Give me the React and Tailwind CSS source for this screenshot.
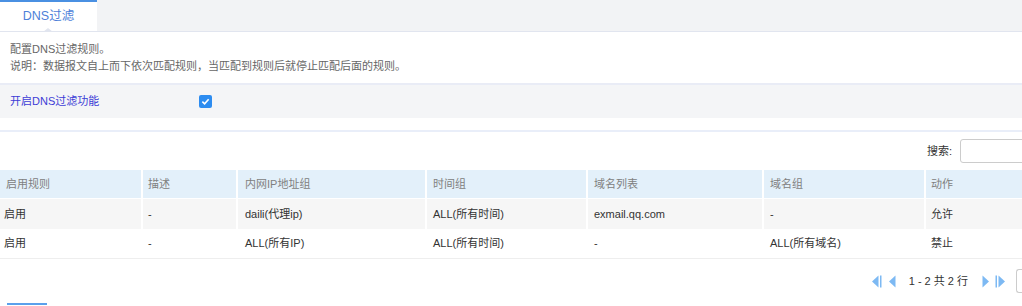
import React from 'react';

const font = { fontFamily: '"Liberation Sans", "Noto Sans CJK SC", sans-serif' };

const cols = [
  { key: 'enable', label: '启用规则', w: 'w-[141px]', pl: 'pl-[6px]' },
  { key: 'desc', label: '描述', w: 'w-[93px]', pl: 'pl-[5px]' },
  { key: 'ip', label: '内网IP地址组', w: 'w-[187px]', pl: 'pl-[7px]' },
  { key: 'time', label: '时间组', w: 'w-[159px]', pl: 'pl-[6px]' },
  { key: 'domains', label: '域名列表', w: 'w-[174px]', pl: 'pl-[6px]' },
  { key: 'dgroup', label: '域名组', w: 'w-[160px]', pl: 'pl-[6px]' },
  { key: 'action', label: '动作', w: 'flex-1', pl: 'pl-[5px]' },
];

const rows = [
  { enable: '启用', desc: '-', ip: 'daili(代理ip)', time: 'ALL(所有时间)', domains: 'exmail.qq.com', dgroup: '-', action: '允许' },
  { enable: '启用', desc: '-', ip: 'ALL(所有IP)', time: 'ALL(所有时间)', domains: '-', dgroup: 'ALL(所有域名)', action: '禁止' },
];

const PagerIcon = ({ dir, bar }) => (
  <svg width="11" height="13" viewBox="0 0 11 13" className="shrink-0">
    {dir === 'left' ? (
      <>
        <polygon points="7.5,0.5 7.5,12.5 1,6.5" fill="#7db9f3" />
        {bar && <rect x="9" y="0.5" width="1.5" height="12" fill="#7db9f3" />}
      </>
    ) : (
      <>
        {bar && <rect x="0.5" y="0.5" width="1.5" height="12" fill="#7db9f3" />}
        <polygon points="3.5,0.5 3.5,12.5 10,6.5" fill="#7db9f3" />
      </>
    )}
  </svg>
);

const App = () => {
  return (
    <div className="w-[1022px] h-[306px] overflow-hidden bg-white relative" style={font}>
      {/* Tabs */}
      <div className="h-[32px] bg-[#f2f3f5] border-b border-[#e1e5ef] flex">
        <div className="w-[97px] h-full bg-white border-t-2 border-[#4a90e2] flex items-center justify-center relative">
          <span className="text-[12.5px] text-[#4d7fd9]">DNS过滤</span>
          <span className="absolute left-[43px] bottom-[-1px] w-0 h-0 border-l-[5px] border-r-[5px] border-b-[4px] border-l-transparent border-r-transparent border-b-[#e1e5ef]" />
        </div>
      </div>

      {/* Description */}
      <div className="h-[51px] px-[10px] pt-[9px] text-[11px] leading-[17px] text-[#666]">
        <p>配置DNS过滤规则。</p>
        <p>说明：数据报文自上而下依次匹配规则，当匹配到规则后就停止匹配后面的规则。</p>
      </div>

      {/* Enable */}
      <div className="h-[35px] bg-[#f4f5f7] border-t-2 border-[#e9ecf6] flex items-center">
        <span className="w-[199px] pl-[10px] text-[11px] text-[#3d3dd6]">开启DNS过滤功能</span>
        <span className="w-[13px] h-[13px] rounded-[2px] bg-[#2d8cf0] flex items-center justify-center">
          <svg width="9" height="9" viewBox="0 0 10 10">
            <path d="M1.5 5.2 L4 7.5 L8.5 2.5" stroke="white" strokeWidth="1.8" fill="none" />
          </svg>
        </span>
      </div>

      <div className="h-[12px]" />

      {/* Table section */}
      <div className="border-t-2 border-[#e9eef9]">
        <div className="h-[38px] flex items-center justify-end">
          <span className="text-[11px] text-[#333] mr-[8px]">搜索:</span>
          <div className="w-[70px] h-[24px] border border-[#ccc] rounded-[3px] mr-[-8px]" />
        </div>

        <div className="flex h-[28px] gap-[2px] text-[11px] text-[#808080]">
          {cols.map((c) => (
            <div key={c.key} className={`${c.w} ${c.pl} bg-[#e3f0fa] flex items-center`}>
              {c.label}
            </div>
          ))}
        </div>

        {rows.map((r, i) => (
          <div
            key={i}
            className={`flex h-[30px] gap-[2px] text-[11px] text-[#333] ${i === 0 ? 'bg-white mt-[1px]' : 'border-b border-[#eee]'}`}
          >
            {cols.map((c) => (
              <div
                key={c.key}
                className={`${c.w} ${i === 0 ? 'bg-[#f6f6f6]' : 'bg-white'} flex items-center ${c.key === 'enable' ? 'pl-[4px]' : c.pl}`}
              >
                {r[c.key]}
              </div>
            ))}
          </div>
        ))}

        {/* Pager */}
        <div className="h-[44px] flex items-center justify-end text-[11px] text-[#333]">
          <PagerIcon dir="left" bar />
          <span className="w-[6px]" />
          <PagerIcon dir="left" />
          <span className="ml-[10px] mr-[11px]">1 - 2 共 2 行</span>
          <PagerIcon dir="right" />
          <span className="w-[5px]" />
          <PagerIcon dir="right" bar />
          <div className="w-[6px] h-[24px] border border-[#ccc] rounded-l-[3px] border-r-0 ml-[10px]" />
        </div>
      </div>

      <div className="absolute left-[7px] bottom-[1px] w-[40px] h-[2px] bg-[#5aa0ec]" />
    </div>
  );
};

export default App;
